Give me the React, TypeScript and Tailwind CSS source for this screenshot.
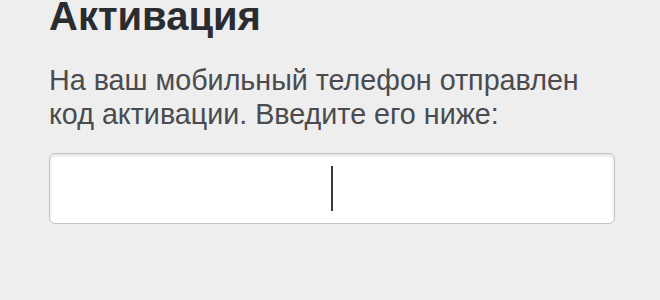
export default function App() {
  return (
    <div className="h-[300px] w-[660px] overflow-hidden bg-[#eeeeee] font-['Liberation_Sans',Arial,sans-serif]">
      <div className="pl-[49px] pr-[45px]">
        <h1 className="-mt-[6px] text-[40px] font-bold leading-[44px] text-[#2a2c30]">Активация</h1>
        <p className="mt-[25px] text-[28.7px] leading-[34px] text-[#4a4b4f]">
          На ваш мобильный телефон отправлен
          <br />
          код активации. Введите его ниже:
        </p>
        <div className="mt-[22px] flex h-[71px] w-[566px] items-center justify-center rounded-[6px] border border-[#c4c4c4] bg-white shadow-[inset_0_2px_3px_rgba(0,0,0,0.12)]">
          <span className="h-[45px] w-[2px] bg-[#3a3a3a]" />
        </div>
      </div>
    </div>
  );
}
